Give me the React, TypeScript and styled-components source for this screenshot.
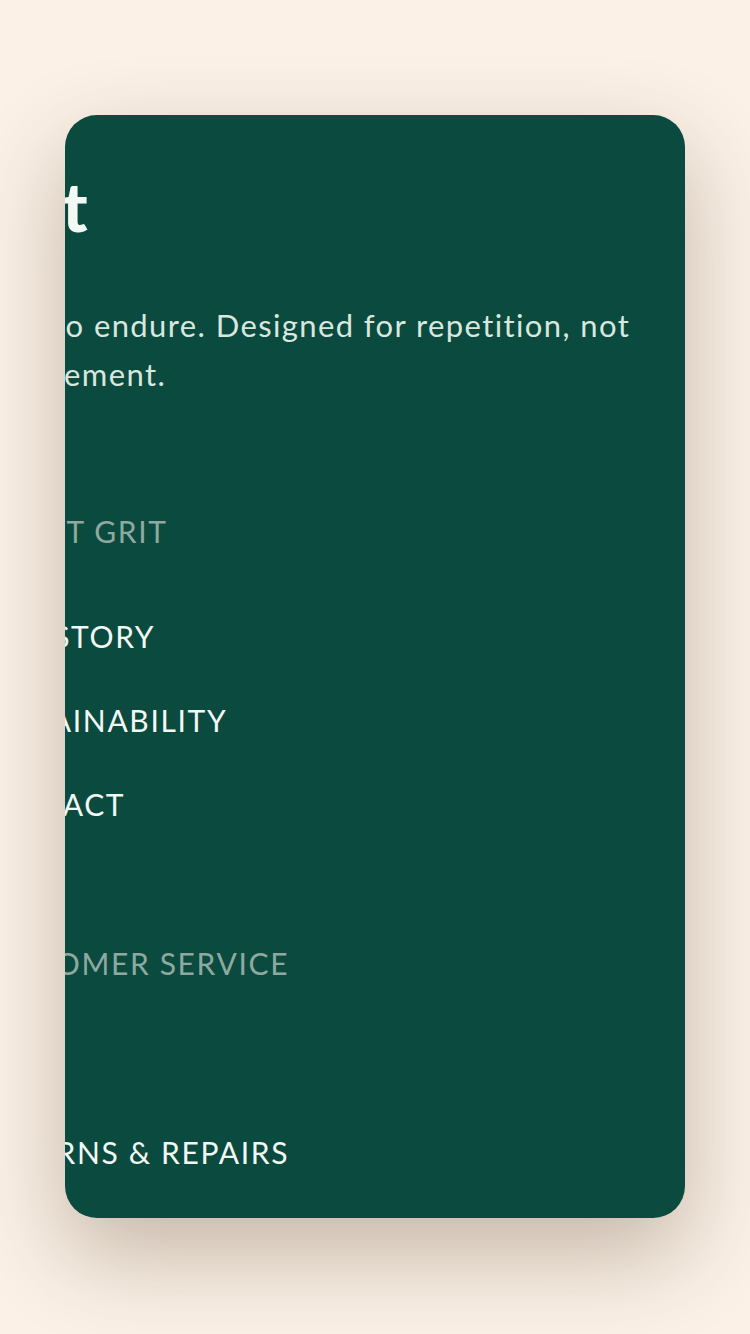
import React from 'react';
import styled, { createGlobalStyle } from 'styled-components';

const colors = {
  cream: '#fbf1e7',
  forest: '#0b4a3f',
  white: '#f2f8f4',
  mist: '#d9e7df',
  muted: '#8ea99f',
};

const GlobalStyle = createGlobalStyle`
  html, body {
    margin: 0;
    padding: 0;
    background-color: ${colors.cream};
  }
  body {
    font-family: Lato, "Open Sans", sans-serif;
  }
`;

const menuSections = [
  {
    title: 'About Grit',
    links: ['Our Story', 'Sustainability', 'Contact'],
  },
  {
    title: 'Customer Service',
    links: ['FAQ', 'Returns & Repairs'],
  },
];

const App = () => {
  return (
    <Page>
      <GlobalStyle />
      <Frame>
        <Drawer>
          <Title>Grit</Title>
          <Tagline>
            Built to endure. Designed for repetition, not replacement.
          </Tagline>

          {menuSections.map((section) => (
            <Section key={section.title}>
              <SectionTitle>{section.title}</SectionTitle>
              <LinkList>
                {section.links.map((link) => (
                  <li key={link}>
                    <MenuLink href="#">{link}</MenuLink>
                  </li>
                ))}
              </LinkList>
            </Section>
          ))}
        </Drawer>
      </Frame>
    </Page>
  );
};

const Page = styled.div`
  min-height: 100vh;
  display: flex;
  justify-content: center;
  padding-top: 115px;
  box-sizing: border-box;
  background-color: ${colors.cream};
`;

const Frame = styled.div`
  width: 620px;
  height: 1103px;
  border-radius: 32px;
  overflow: hidden;
  background-color: ${colors.forest};
  box-shadow: 0 36px 90px rgba(74, 48, 22, 0.3);
`;

/* the drawer is caught mid-slide, so its left edge sits outside the frame */
const Drawer = styled.nav`
  width: 760px;
  padding: 56px 48px 0;
  box-sizing: border-box;
  transform: translateX(-139px);
`;

const Title = styled.h1`
  margin: 0;
  font-size: 68px;
  line-height: 70px;
  font-weight: 900;
  letter-spacing: -0.02em;
  color: ${colors.white};
`;

const Tagline = styled.p`
  width: 680px;
  margin: 60px 0 0;
  font-size: 31px;
  line-height: 49px;
  letter-spacing: 0.045em;
  color: ${colors.mist};
`;

const Section = styled.div`
  margin-top: 115px;

  & + & {
    margin-top: 120px;
  }
`;

const SectionTitle = styled.h2`
  margin: 0;
  font-size: 30px;
  line-height: 34px;
  font-weight: 400;
  letter-spacing: 0.055em;
  text-transform: uppercase;
  color: ${colors.muted};
`;

const LinkList = styled.ul`
  list-style: none;
  margin: 66px 0 0;
  padding: 0;
  display: flex;
  flex-direction: column;
  gap: 40px;
`;

const MenuLink = styled.a`
  display: block;
  font-size: 30px;
  line-height: 44px;
  letter-spacing: 0.055em;
  text-transform: uppercase;
  text-decoration: none;
  color: ${colors.white};
`;

export default App;
